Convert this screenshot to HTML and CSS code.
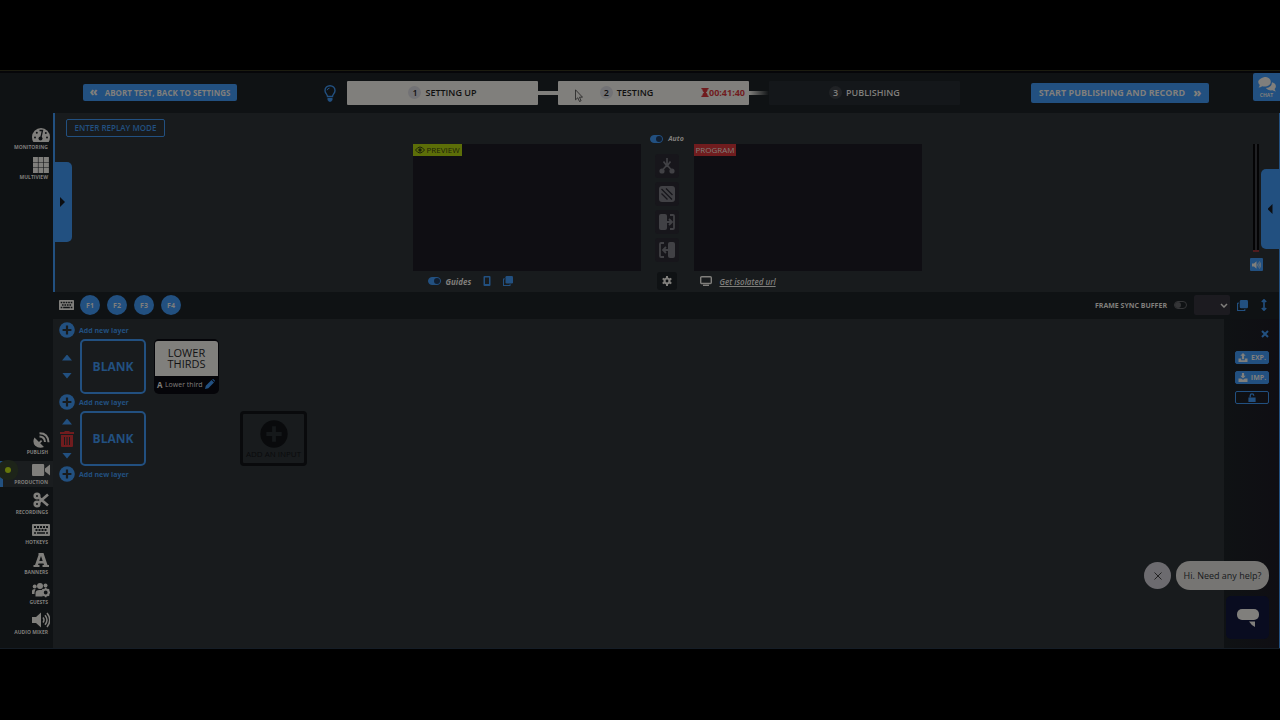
FILE: index.html
```html
<!DOCTYPE html>
<html lang="en">
<head>
  <meta charset="UTF-8">
  <title>Production</title>
  <link rel="stylesheet" href="styles.css">
</head>
<body>
  <!-- shared icons -->
  <svg class="sprite" width="0" height="0">
    <symbol id="plus" viewBox="0 0 16 16"><circle cx="8" cy="8" r="7.8" fill="currentColor"/><path d="M8 3.6v8.8M3.6 8h8.8" stroke="var(--hole)" stroke-width="2.2"/></symbol>
    <symbol id="keyboard" viewBox="0 0 18 12"><path fill="currentColor" fill-rule="evenodd" d="M1 0h16q1 0 1 1v10q0 1-1 1H1q-1 0-1-1V1q0-1 1-1zM2 2v2h2V2zM5 2v2h2V2zM8 2v2h2V2zM11 2v2h2V2zM14 2v2h2V2zM3.500 5v2h2V5zM6.500 5v2h2V5zM9.500 5v2h2V5zM12.500 5v2h2V5zM2 8.200v1.600h2V8.200zM5 8.200v1.600h8V8.200zM14 8.200v1.600h2V8.200z"/></symbol>
    <symbol id="copy" viewBox="0 0 12 12"><rect x="3" y="0" width="9" height="9" rx="1.500" fill="currentColor"/><path d="M2 3.500H1.200q-.7 0-.7.7v6.600q0 .7.7.7h6.600q.7 0 .7-.7V10" fill="none" stroke="currentColor" stroke-width="1.400"/></symbol>
    <symbol id="volume" viewBox="0 0 18 16"><path fill="currentColor" d="M0 5h4l5-4.500v15L4 11H0z"/><path d="M11 5.500q2 2.500 0 5M13 3.200q4 4.800 0 9.600M15 1q5.500 7 0 14" fill="none" stroke="currentColor" stroke-width="1.500"/></symbol>
  </svg>

  <div class="app">
    <header class="topbar">
      <button class="btn btn-abort"><b>«</b>ABORT TEST, BACK TO SETTINGS</button>
      <svg class="bulb" viewBox="0 0 12 17"><path d="M3.500 11.500C3.500 9 1 8.500 1 5.400a5 4.700 0 0 1 10 0C11 8.500 8.500 9 8.500 11.500z" fill="none" stroke="currentColor" stroke-width="1.400"/><path d="M3.200 5.200Q3.500 3.400 5.500 3.200" fill="none" stroke="currentColor"/><path d="M3.500 13h5v2L7 16.800H5L3.500 15z" fill="currentColor"/></svg>
      <div class="steps">
        <div class="step"><i>1</i>SETTING UP</div>
        <span class="link"></span>
        <div class="step timed">
          <i>2</i>TESTING
          <span class="timer"><svg viewBox="0 0 8 10"><path d="M0 0h8v1.500H7Q7 4 5 5q2 1 2 3.500h1V10H0V8.500h1Q1 6 3 5 1 4 1 1.500H0z" fill="currentColor"/></svg>00:41:40</span>
          <svg class="cursor" viewBox="0 0 8 13"><path d="M.5.8v10l2.300-2 1.700 3.700 1.600-.7-1.600-3.600H7.500z" fill="#807f7c" stroke="#222" stroke-width=".8"/></svg>
        </div>
        <span class="link fade"></span>
        <div class="step next"><i>3</i>PUBLISHING</div>
      </div>
      <button class="btn btn-start">START PUBLISHING AND RECORD<b>»</b></button>
      <button class="chat">
        <svg viewBox="0 0 18 15"><path fill="currentColor" d="M6.500 0c3.600 0 6.300 2 6.300 4.700s-2.700 4.800-6.300 4.800q-1.200 0-2.200-.3Q2.500 10.500.5 10.500 1.600 9.300 1.800 8 .2 6.700.2 4.700.2 2 6.500 0z"/><path fill="currentColor" d="M14 5.200q3.900 1 3.900 4 0 1.700-1.300 2.800.3 1.300 1.300 2.400-2 0-3.500-1.100-4.400.8-6.600-2.300 6-.6 6.200-5.800z"/></svg>
        CHAT
      </button>
    </header>

    <div class="body">
      <nav class="sidebar">
        <a href="#" class="nav"><svg viewBox="0 0 18 16"><path fill="currentColor" fill-rule="evenodd" d="M9 1a9 9 0 0 1 9 9q0 2.600-1.300 5H1.300Q0 12.600 0 10a9 9 0 0 1 9-9z"/><g fill="#0f1214"><circle cx="3" cy="10.500" r="1"/><circle cx="4.800" cy="5.800" r="1"/><circle cx="13.800" cy="6" r="1"/><circle cx="15" cy="10.500" r="1"/><circle cx="8.500" cy="11.500" r="2"/></g><path d="M8.800 11l1.700-7.500H7.500" stroke="#0f1214" stroke-width="1.300" fill="none"/></svg>MONITORING</a>
        <a href="#" class="nav"><svg viewBox="0 0 18 16"><path fill="currentColor" d="M1 0h4.900v4.900H1zM6.500 0h4.900v4.900H6.500zM12 0h4.900v4.900H12zM1 5.500h4.900v4.900H1zM6.500 5.500h4.900v4.900H6.500zM12 5.500h4.900v4.900H12zM1 11h4.900v4.900H1zM6.500 11h4.900v4.900H6.500zM12 11h4.900v4.900H12z"/></svg>MULTIVIEW</a>
        <a href="#" class="nav lower"><svg viewBox="0 0 18 16"><path fill="currentColor" d="M2.500 5.500L7 10l2-2 1.200 1.200-2 2 3.800 3.800Q7 17 3.200 13.800 0 10 2.500 5.500z"/><path d="M7.500 4.500q5 0 5.500 5.500M7.500 1.300q8.500 0 9 9" fill="none" stroke="currentColor" stroke-width="2"/></svg>PUBLISH</a>
        <a href="#" class="nav current"><svg viewBox="0 0 18 16"><path fill="currentColor" d="M1 2h10q1.200 0 1.200 1.200v9.600q0 1.200-1.200 1.200H1q-1 0-1-1.200V3.200Q0 2 1 2zM13 6.500L18 2.500v11L13 9.500z"/></svg>PRODUCTION</a>
        <a href="#" class="nav"><svg viewBox="0 0 18 16"><g fill="none" stroke="currentColor" stroke-width="2.600"><circle cx="5" cy="4" r="2.300"/><circle cx="5" cy="12" r="2.300"/><path d="M6.800 5.500L16 13.500M6.800 10.500L16 2.500"/></g></svg>RECORDINGS</a>
        <a href="#" class="nav"><svg viewBox="0 -2 18 16"><use href="#keyboard" width="18" height="12"/></svg>HOTKEYS</a>
        <a href="#" class="nav"><svg viewBox="0 0 18 16"><path fill="currentColor" fill-rule="evenodd" d="M6.500 1h5l4 12H17v2h-6.500v-2H12l-.5-1.500H6.500L6 13h1.500v2H1.500v-2H3L6.500 3zM7.300 9h3.400L9 4z"/></svg>BANNERS</a>
        <a href="#" class="nav"><svg viewBox="0 0 18 16"><g fill="currentColor"><circle cx="8" cy="4" r="3"/><circle cx="2.700" cy="4.500" r="2"/><circle cx="13.500" cy="3.500" r="2"/><path d="M0 12V9q0-2 3.500-2-1 2.500-1 5zM3.500 14.500V11q0-3 4-3h3v6.500z"/></g><circle cx="13.700" cy="10.500" r="3" fill="none" stroke="currentColor" stroke-width="2.200"/><path d="M13.700 5.800v2M13.700 13.200v2M9 10.500h2M16.400 10.500h1.600M10.400 7.200l1.400 1.400M15.600 12.400l1.400 1.400M17 7.200l-1.400 1.400M11.800 12.400l-1.400 1.400" stroke="currentColor" stroke-width="1.600"/></svg>GUESTS</a>
        <a href="#" class="nav"><svg viewBox="0 0 18 16"><use href="#volume" width="18" height="16"/></svg>AUDIO MIXER</a>
      </nav>

      <main class="main">
        <section class="monitors">
          <div class="side">
            <button class="btn-replay">ENTER REPLAY MODE</button>
          </div>
          <button class="tab tab-left" aria-label="Open left panel"></button>

          <div class="screen-col">
            <div class="screen"><span class="tag green"><svg viewBox="0 0 10 8"><path d="M.5 4Q5-2 9.500 4 5 10 .5 4z" fill="none" stroke="currentColor"/><circle cx="5" cy="4" r="1.700" fill="currentColor"/></svg>PREVIEW</span></div>
            <div class="screen-foot">
              <label class="switch"><input type="checkbox" checked>Guides</label>
              <svg class="phone" viewBox="0 0 8 10"><path fill="currentColor" fill-rule="evenodd" d="M1.500 0h5q1 0 1 1v8q0 1-1 1h-5q-1 0-1-1V1q0-1 1-1zM2 1.500v6.500h4v-6.500z"/></svg>
              <svg class="copy"><use href="#copy"/></svg>
            </div>
          </div>

          <div class="transitions">
            <label class="switch"><input type="checkbox" checked>Auto</label>
            <button aria-label="Cut"><svg viewBox="0 0 16 16"><g fill="currentColor"><circle cx="3" cy="13" r="2.600"/><circle cx="13" cy="13" r="2.600"/></g><path d="M8 0v8M4.500 3.500L8 8l3.500-4.500M8 7L3.500 12M8 7l4.500 5" stroke="currentColor" stroke-width="1.700" fill="none"/></svg></button>
            <button aria-label="Fade"><svg viewBox="0 0 16 16"><rect width="16" height="16" rx="3" fill="currentColor"/><path d="M2.500 7.500l6 6M2.500 3l10.500 10.500M7 2.500l6.500 6.500" stroke="#17161b" stroke-width="1.300"/></svg></button>
            <button aria-label="Slide in"><svg viewBox="0 0 16 16"><rect width="8" height="16" rx="2" fill="currentColor"/><path d="M11 1h3q1 0 1 1v12q0 1-1 1h-3M7 8h6M10 5L13 8l-3 3" fill="none" stroke="currentColor" stroke-width="1.800"/></svg></button>
            <button aria-label="Slide out"><svg viewBox="0 0 16 16"><rect x="9" width="7" height="16" rx="2" fill="currentColor"/><path d="M5 1H2Q1 1 1 2v12q0 1 1 1h3M9 8H4M7 5L4 8l3 3" fill="none" stroke="currentColor" stroke-width="1.800"/></svg></button>
            <button class="gear" aria-label="Settings"><svg viewBox="0 0 12 12"><circle cx="6" cy="6" r="3" fill="none" stroke="currentColor" stroke-width="2.600"/><path d="M6 0v2.500M6 9.500V12M.8 3l2.200 1.300M9 7.700L11.200 9M.8 9L3 7.700M9 4.300L11.200 3" stroke="currentColor" stroke-width="2.400"/></svg></button>
          </div>

          <div class="screen-col">
            <div class="screen"><span class="tag red">PROGRAM</span></div>
            <div class="screen-foot foot-url">
              <svg class="display" viewBox="0 0 12 10"><rect x=".7" y=".7" width="10.600" height="6.800" rx="1" fill="none" stroke="currentColor" stroke-width="1.400"/><path d="M3 9.300h6" stroke="currentColor" stroke-width="1.400"/></svg>
              <a href="#">Get isolated url</a>
            </div>
          </div>

          <div class="side side-right">
            <div class="meter"></div>
            <button class="mute" aria-label="Mute"><svg><use href="#volume"/></svg></button>
          </div>
          <button class="tab tab-right" aria-label="Open right panel"></button>
        </section>

        <section class="toolbar">
          <svg class="kbd"><use href="#keyboard"/></svg>
          <button class="fkey">F1</button>
          <button class="fkey">F2</button>
          <button class="fkey">F3</button>
          <button class="fkey">F4</button>
          <label class="sync" for="sync">FRAME SYNC BUFFER</label>
          <input type="checkbox" id="sync">
          <div class="drop">
            <select aria-label="Buffer"><option></option></select>
            <svg viewBox="0 0 8 5"><path d="M1 1l3 3 3-3" fill="none" stroke="currentColor" stroke-width="1.500"/></svg>
          </div>
          <svg class="copy"><use href="#copy"/></svg>
          <svg class="resize" viewBox="0 0 6 12"><path d="M3 1v10M.8 3L3 .8 5.200 3M.8 9L3 11.200 5.200 9" fill="none" stroke="currentColor" stroke-width="1.600"/></svg>
        </section>

        <section class="workspace">
          <div class="layers">
            <button class="add-layer"><svg><use href="#plus"/></svg>Add new layer</button>
            <div class="layer">
              <div class="order">
                <button class="up" aria-label="Move up"></button>
                <button class="down" aria-label="Move down"></button>
              </div>
              <button class="blank">BLANK</button>
              <div class="card">
                <div class="thumb">LOWER<br>THIRDS</div>
                <div class="card-foot">
                  <b>A</b><span>Lower third</span>
                  <svg viewBox="0 0 10 10"><path d="M0 10l.8-3.300L6.500 1l2.500 2.500-5.700 5.700zM7.200.5q.8-.8 1.600 0l.8.8q.6.700 0 1.500z" fill="currentColor"/></svg>
                </div>
              </div>
            </div>
            <button class="add-layer"><svg><use href="#plus"/></svg>Add new layer</button>
            <div class="layer">
              <div class="order">
                <button class="up" aria-label="Move up"></button>
                <button class="trash" aria-label="Delete layer"><svg viewBox="0 0 14 16"><path fill="currentColor" fill-rule="evenodd" d="M0 1h4l1-1h4l1 1h4v2H0zM1 4h12v11q0 1-1 1H2q-1 0-1-1zM4 6v8h1V6zM6.500 6v8h1V6zM9 6v8h1V6z"/></svg></button>
                <button class="down" aria-label="Move down"></button>
              </div>
              <button class="blank">BLANK</button>
              <button class="add-input"><svg><use href="#plus"/></svg>ADD AN INPUT</button>
            </div>
            <button class="add-layer"><svg><use href="#plus"/></svg>Add new layer</button>
          </div>

          <aside class="tools">
            <button class="close" aria-label="Close"><svg viewBox="0 0 8 8"><path d="M1 1l6 6M7 1L1 7" stroke="currentColor" stroke-width="2"/></svg></button>
            <button class="tool"><svg viewBox="0 0 10 10"><path fill="currentColor" d="M5 0l3 3H6.200v4H3.800V3H2zM0 6h3v2h4V6h3v4H0z"/></svg>EXP.</button>
            <button class="tool"><svg viewBox="0 0 10 10"><path fill="currentColor" d="M3.800 0h2.400v3H8L5 6 2 3h1.800zM0 6h3l2 1.500L7 6h3v4H0z"/></svg>IMP.</button>
            <button class="tool lock" aria-label="Unlock"><svg viewBox="0 0 10 10"><path d="M1 5h8v5H1z" fill="currentColor"/><path d="M3 5V3q0-2 2-2t2 2" fill="none" stroke="currentColor" stroke-width="1.500"/></svg></button>
          </aside>
        </section>
      </main>
    </div>

    <div class="help">
      <button class="help-close" aria-label="Dismiss"><svg viewBox="0 0 8 8"><path d="M.5.5l7 7M7.500.5l-7 7" stroke="currentColor"/></svg></button>
      <div class="help-text">Hi. Need any help?</div>
      <button class="launcher" aria-label="Open chat"><svg viewBox="0 0 22 18"><rect width="22" height="11" rx="5" fill="currentColor"/><path d="M12 12.500h6V18q-3-1-6-5.500z" fill="currentColor"/></svg></button>
    </div>
  </div>
</body>
</html>
```

FILE: styles.css
```css
:root {
  --blue: #225080;
  --white: #807f7c;
  --dark: #0f1214;
  --panel: #181b1d;
  --screen: #0f0e13;
  --red: #701c1e;
  --hole: #181b1d;
}

* {
  box-sizing: border-box;
}

body {
  margin: 0;
  padding: 70px 0 71px;
  background: #000;
  color: var(--white);
  font-family: "Open Sans", sans-serif;
  font-size: 7px;
}

button {
  border: none;
  margin: 0;
  padding: 0;
  background: none;
  color: inherit;
  font-family: inherit;
  cursor: pointer;
}

a {
  color: inherit;
}

svg {
  display: block;
  flex: none;
}

.sprite {
  position: absolute;
}

.app {
  position: relative;
  display: flex;
  flex-direction: column;
  min-height: calc(100vh - 141px);
  padding-top: 2px;
  background: #060609;
  border-top: 1px solid #1c1c10;
  border-bottom: 1px solid #151d26;
}

/* top bar */
.topbar {
  display: flex;
  align-items: center;
  height: 40px;
  padding-left: 83px;
  background: var(--dark);
}

.btn {
  display: flex;
  align-items: center;
  justify-content: center;
  padding-bottom: 1px;
  background: var(--blue);
  border-radius: 2px;
  font-weight: 700;
  white-space: nowrap;
}

.btn b {
  font-size: 12px;
  line-height: 12px;
}

.btn-abort {
  width: 154px;
  height: 17px;
  margin-bottom: 1px;
  gap: 7px;
  font-size: 8px;
}

.btn-start {
  width: 178px;
  height: 20px;
  gap: 8px;
  margin: 0 44px 0 71px;
  font-size: 9px;
}

.bulb {
  width: 12px;
  height: 17px;
  margin: 0 11px 0 87px;
  color: var(--blue);
}

.steps {
  flex: 1;
  display: grid;
  grid-template-columns: 1fr 20px 1fr 20px 1fr;
  align-items: center;
}

.step {
  position: relative;
  display: flex;
  align-items: center;
  justify-content: center;
  gap: 4px;
  height: 24px;
  padding-bottom: 1px;
  background: var(--white);
  border-radius: 1px;
  color: #101010;
  font-size: 9px;
  font-weight: 600;
}

.step i {
  width: 13px;
  height: 13px;
  border-radius: 50%;
  background: #727275;
  font-style: normal;
  line-height: 13px;
  text-align: center;
}

.step.timed {
  padding-right: 54px;
}

.step.next {
  background: #14171a;
  color: var(--white);
}

.step.next i {
  background: #202225;
}

.link {
  height: 4px;
  background: var(--white);
}

.link.fade {
  background: linear-gradient(to right, var(--white), var(--dark));
}

.timer {
  position: absolute;
  right: 4px;
  display: flex;
  align-items: center;
  color: var(--red);
  font-weight: 700;
}

.timer svg {
  width: 8px;
  height: 9px;
}

.cursor {
  position: absolute;
  left: 17px;
  top: 8px;
  width: 8px;
  height: 13px;
}

.chat {
  align-self: flex-start;
  width: 27px;
  height: 28px;
  padding-top: 2px;
  background: var(--blue);
  border-radius: 2px 0 0 2px;
  font-size: 5px;
  font-weight: 700;
  line-height: 7px;
}

.chat svg {
  width: 18px;
  height: 15px;
  margin: 0 auto;
}

.body {
  flex: 1;
  display: flex;
}

/* left menu */
.sidebar {
  width: 53px;
  display: flex;
  flex-direction: column;
  gap: 4px;
  padding: 13px 0 11px;
  background: var(--dark);
}

.nav {
  position: relative;
  display: flex;
  flex-direction: column;
  align-items: flex-end;
  height: 26px;
  padding: 1px 5px 0 0;
  font-size: 5px;
  font-weight: 700;
  line-height: 8px;
  text-decoration: none;
  white-space: nowrap;
}

.nav svg {
  width: 18px;
  height: 16px;
  margin-right: -2px;
}

.nav.lower {
  margin-top: auto;
}

.nav.current {
  background: #1a1d1f;
  border-left: 3px solid var(--blue);
}

.nav.current::before {
  content: "";
  position: absolute;
  left: 2px;
  top: 6px;
  width: 6px;
  height: 6px;
  border-radius: 50%;
  background: #66780a;
  box-shadow: 0 0 0 7px #1d2419;
}

.main {
  flex: 1;
  display: flex;
  flex-direction: column;
  min-width: 0;
  background: var(--panel);
  border-right: 1px solid var(--blue);
}

/* monitors */
.monitors {
  position: relative;
  display: grid;
  grid-template-columns: 1fr 228px 53px 228px 1fr;
  height: 179px;
  border-left: 2px solid var(--blue);
}

.side {
  padding: 6px 0 0 11px;
}

.btn-replay {
  width: 99px;
  height: 18px;
  padding-bottom: 1px;
  border: 1px solid var(--blue);
  border-radius: 2px;
  color: var(--blue);
  font-size: 8px;
  font-weight: 600;
  white-space: nowrap;
}

.tab {
  position: absolute;
  width: 18px;
  height: 80px;
  background: var(--blue);
}

.tab::before {
  content: "";
  display: block;
  width: 5px;
  height: 10px;
  margin: 0 auto;
  background: #0c0e12;
}

.tab-left {
  left: -1px;
  top: 49px;
  border-radius: 0 5px 5px 0;
}

.tab-left::before {
  margin-left: 6px;
  clip-path: polygon(0 0, 100% 50%, 0 100%);
}

.tab-right {
  right: 0;
  top: 56px;
  border-radius: 5px 0 0 5px;
}

.tab-right::before {
  clip-path: polygon(100% 0, 0 50%, 100% 100%);
}

.screen-col {
  padding-top: 31px;
}

.screen {
  height: 127px;
  background: var(--screen);
}

.tag {
  display: inline-flex;
  align-items: center;
  gap: 2px;
  height: 12px;
  padding: 0 2px 1px;
  font-size: 8px;
  vertical-align: top;
}

.tag svg {
  width: 10px;
  height: 8px;
}

.green {
  background: #5c6e08;
  color: #1d220a;
}

.red {
  background: var(--red);
}

.screen-foot {
  display: flex;
  align-items: center;
  gap: 12px;
  height: 20px;
  padding-left: 15px;
  color: var(--blue);
}

.foot-url {
  gap: 8px;
  padding-left: 6px;
  color: var(--white);
  font-size: 8px;
  font-style: italic;
  font-weight: 600;
}

.phone {
  width: 8px;
  height: 10px;
}

.display {
  width: 12px;
  height: 10px;
}

.copy {
  width: 11px;
  height: 11px;
  color: var(--blue);
}

.screen-foot .copy {
  width: 10px;
  height: 10px;
}

.switch {
  display: flex;
  align-items: center;
  gap: 5px;
  color: var(--white);
  font-size: 8px;
  font-style: italic;
  font-weight: 700;
}

input[type="checkbox"] {
  appearance: none;
  display: flex;
  align-items: center;
  flex: none;
  width: 13px;
  height: 8px;
  margin: 0;
  border: 1px solid #343537;
  border-radius: 4px;
}

input[type="checkbox"]::before {
  content: "";
  width: 6px;
  height: 6px;
  border-radius: 50%;
  background: #343537;
}

input[type="checkbox"]:checked {
  justify-content: flex-end;
  background: var(--blue);
  border-color: var(--blue);
}

input[type="checkbox"]:checked::before {
  background: #101e30;
}

.transitions {
  display: flex;
  flex-direction: column;
  align-items: center;
  gap: 4px;
  padding-top: 20px;
}

.transitions .switch {
  height: 11px;
  margin-bottom: 6px;
  font-size: 7px;
}

.transitions button {
  display: grid;
  place-items: center;
  width: 24px;
  height: 24px;
  background: #17161b;
  border-radius: 3px;
  color: #414145;
}

.transitions button svg {
  width: 16px;
  height: 16px;
}

.transitions .gear {
  width: 20px;
  height: 18px;
  margin-top: 6px;
  background: var(--dark);
  color: var(--white);
}

.transitions .gear svg {
  width: 10px;
  height: 10px;
}

.side-right {
  display: flex;
  flex-direction: column;
  align-items: flex-end;
  padding: 31px 16px 0 0;
}

.meter {
  width: 6px;
  height: 108px;
  margin-right: 4px;
  background: linear-gradient(to right, #040405 40%, #202124 40% 60%, #040405 60%);
  border-bottom: 2px solid #501c1e;
}

.mute {
  display: grid;
  place-items: center;
  width: 13px;
  height: 13px;
  margin-top: 6px;
  background: var(--blue);
  border-radius: 1px;
}

.mute svg {
  width: 9px;
  height: 8px;
}

/* toolbar */
.toolbar {
  display: flex;
  align-items: center;
  gap: 7px;
  height: 27px;
  padding: 0 12px 1px 6px;
  background: var(--dark);
}

.kbd {
  width: 15px;
  height: 10px;
  margin-right: -1px;
}

.fkey {
  width: 20px;
  height: 20px;
  background: var(--blue);
  border-radius: 50%;
  font-size: 7px;
  font-weight: 700;
}

.sync {
  margin-left: auto;
  font-size: 7px;
  font-weight: 700;
}

.drop {
  position: relative;
  width: 36px;
}

.drop select {
  display: block;
  appearance: none;
  width: 100%;
  height: 20px;
  border: none;
  border-radius: 2px;
  background: #1c1b20;
}

.drop svg {
  position: absolute;
  right: 2px;
  top: 8px;
  width: 8px;
  height: 5px;
}

.resize {
  width: 6px;
  height: 12px;
  margin-left: 6px;
  color: var(--blue);
}

/* layers */
.workspace {
  flex: 1;
  display: flex;
}

.layers {
  flex: 1;
  padding: 3px 6px;
}

.add-layer {
  display: flex;
  align-items: center;
  gap: 4px;
  height: 17px;
  padding-bottom: 1px;
  color: var(--blue);
  font-size: 7px;
  font-weight: 700;
}

.add-layer svg {
  width: 16px;
  height: 16px;
}

.layer {
  display: flex;
  height: 55px;
}

.order {
  display: flex;
  flex-direction: column;
  align-items: center;
  justify-content: center;
  gap: 12px;
  width: 16px;
  margin-right: 5px;
}

.order:has(.trash) {
  gap: 6px;
}

.up,
.down {
  width: 10px;
  height: 6px;
  background: var(--blue);
  clip-path: polygon(50% 0, 100% 100%, 0 100%);
}

.down {
  clip-path: polygon(0 0, 100% 0, 50% 100%);
}

.trash {
  color: var(--red);
}

.trash svg {
  width: 14px;
  height: 16px;
}

.blank {
  width: 66px;
  border: 2px solid var(--blue);
  border-radius: 5px;
  color: var(--blue);
  font-size: 12px;
  font-weight: 700;
}

.card {
  width: 65px;
  margin-left: 8px;
  padding: 2px 1px;
  background: #050509;
  border-radius: 5px;
}

.thumb {
  height: 35px;
  padding-top: 6px;
  background: var(--white);
  border-radius: 3px 3px 0 0;
  color: #121214;
  font-size: 11px;
  line-height: 11px;
  text-align: center;
}

.card-foot {
  display: flex;
  align-items: center;
  justify-content: space-between;
  height: 16px;
  padding: 0 3px 0 2px;
  white-space: nowrap;
}

.card-foot b {
  font-size: 8px;
}

.card-foot svg {
  width: 10px;
  height: 10px;
  color: var(--blue);
}

.add-input {
  --hole: #15181a;
  display: flex;
  flex-direction: column;
  align-items: center;
  justify-content: center;
  gap: 2px;
  width: 67px;
  margin-left: 94px;
  border: 3px solid #090a0c;
  border-radius: 4px;
  color: #090a0c;
  font-size: 8px;
  line-height: 8px;
}

.add-input svg {
  width: 28px;
  height: 28px;
}

/* right tools */
.tools {
  display: flex;
  flex-direction: column;
  align-items: flex-end;
  gap: 7px;
  width: 55px;
  padding: 11px 10px 0 0;
  background: linear-gradient(to right, var(--dark), var(--screen));
}

.close {
  margin-bottom: 6px;
  color: var(--blue);
}

.close svg {
  width: 8px;
  height: 8px;
}

.tool {
  display: flex;
  align-items: center;
  justify-content: center;
  gap: 3px;
  width: 34px;
  height: 13px;
  background: var(--blue);
  border: 1px solid var(--blue);
  border-radius: 2px;
  font-size: 7px;
  font-weight: 700;
}

.tool svg {
  width: 10px;
  height: 9px;
}

.lock {
  background: none;
  color: var(--blue);
}

/* help widget over the workspace */
.help {
  position: absolute;
  right: 11px;
  bottom: 9px;
  display: grid;
  grid-template-columns: 27px 93px;
  gap: 6px 5px;
  align-items: center;
}

.help-close {
  display: grid;
  place-items: center;
  width: 27px;
  height: 27px;
  background: #6c6b6f;
  border-radius: 50%;
  color: #222;
}

.help-close svg {
  width: 8px;
  height: 8px;
}

.help-text {
  height: 29px;
  background: #767573;
  border-radius: 14px;
  color: #17191c;
  font-size: 9px;
  line-height: 29px;
  text-align: center;
}

.launcher {
  grid-column: 2;
  justify-self: end;
  display: grid;
  place-items: center;
  width: 43px;
  height: 43px;
  background: #090c20;
  border-radius: 5px;
}

.launcher svg {
  width: 22px;
  height: 18px;
}
```
